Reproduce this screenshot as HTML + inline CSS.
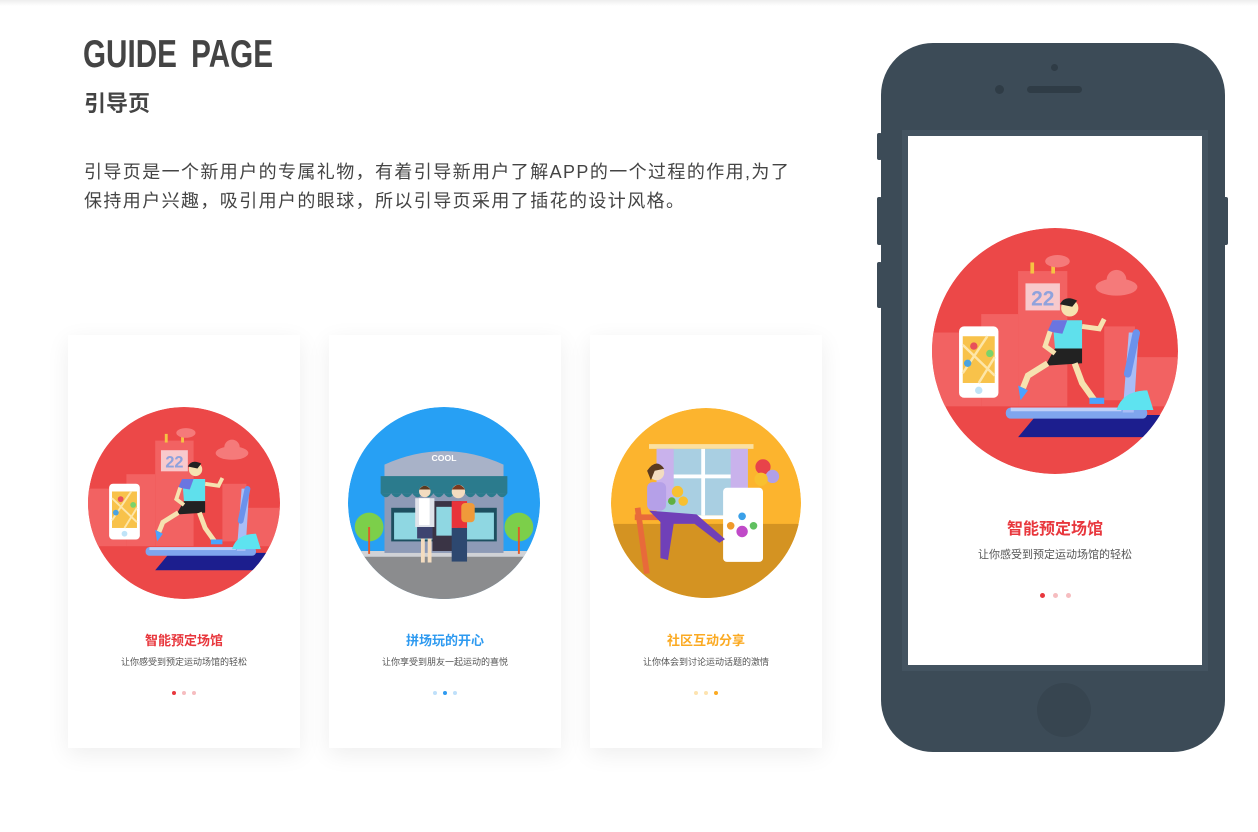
<!DOCTYPE html>
<html><head><meta charset="utf-8">
<style>
*{margin:0;padding:0;box-sizing:border-box}
body{width:1258px;height:832px;background:#fff;position:relative;overflow:hidden;font-family:"Liberation Sans","Noto Sans CJK SC",sans-serif}
.topline{position:absolute;left:0;top:0;width:1258px;height:6px;background:linear-gradient(#eee,#fff)}
h1{position:absolute;left:83px;top:33px;font-family:"Liberation Sans",sans-serif;font-weight:bold;font-size:39px;color:#444;transform:scaleX(0.76);transform-origin:left;word-spacing:8px;white-space:nowrap}
h2{position:absolute;left:84px;top:86px;font-size:22px;font-weight:bold;color:#444}
p.d{position:absolute;left:84px;top:158px;font-size:18px;line-height:29px;color:#444;width:760px;letter-spacing:1.4px;white-space:nowrap}
.card{position:absolute;top:335px;width:232px;height:413px;background:#fff;box-shadow:0 6px 22px rgba(0,0,0,0.07)}
.card svg{position:absolute;left:20px;top:72px}
.ct{position:absolute;left:0;width:100%;top:295px;text-align:center;font-size:13px;font-weight:bold}
.cs{position:absolute;left:0;width:100%;top:320px;text-align:center;font-size:9px;color:#555}
.dots{position:absolute;left:0;width:100%;top:356px;text-align:center;font-size:0}
.dots i{display:inline-block;width:4px;height:4px;border-radius:50%;margin:0 3px}
.phone{position:absolute;left:881px;top:43px;width:344px;height:709px;background:#3c4b57;border-radius:52px}
.btn{position:absolute;background:#3c4b57;width:5px;border-radius:2px}
.screen{position:absolute;left:27px;top:93px;width:294px;height:529px;background:#fff;outline:6px solid #435360}
</style></head><body>
<div class="topline"></div>
<h1>GUIDE PAGE</h1>
<h2>引导页</h2>
<p class="d">引导页是一个新用户的专属礼物，有着引导新用户了解APP的一个过程的作用,为了<br>保持用户兴趣，吸引用户的眼球，所以引导页采用了插花的设计风格。</p>

<!-- card 1 -->
<div class="card" style="left:68px">
<svg width="192" height="192" viewBox="-100 -100 200 200">
<defs><clipPath id="c1"><circle r="100"/></clipPath></defs>
<g clip-path="url(#c1)">
<circle r="100" fill="#ec4848"/>
<g fill="#f26262"><rect x="-100" y="-15" width="40" height="60"/><rect x="-60" y="-30" width="30" height="75"/><rect x="-30" y="-65" width="40" height="110"/><rect x="40" y="-20" width="25" height="60"/><rect x="65" y="5" width="40" height="40"/></g>
<rect x="-24" y="-55" width="28" height="22" fill="#f8c9cc"/>
<text x="-10" y="-37" font-size="17" font-weight="bold" fill="#8fa2dc" text-anchor="middle" font-family="Liberation Sans">22</text>
<rect x="-20" y="-72" width="3" height="9" fill="#f6c243"/><rect x="-3" y="-72" width="3" height="9" fill="#f6c243"/>
<g fill="#f57a7a"><ellipse cx="2" cy="-73" rx="10" ry="5"/><ellipse cx="50" cy="-52" rx="17" ry="7"/><circle cx="50" cy="-58" r="8"/></g>
<rect x="-78" y="-20" width="32" height="58" rx="4" fill="#fff"/>
<rect x="-75" y="-12" width="26" height="38" fill="#f8c24a"/>
<path d="M-75 -5 L-49 20 M-75 18 L-55 -12 M-62 26 L-49 5" stroke="#fde6a8" stroke-width="2"/>
<circle cx="-62" cy="32" r="3" fill="#bfe3f7"/>
<circle cx="-66" cy="-4" r="3" fill="#e8505a"/><circle cx="-71" cy="10" r="3" fill="#4aa3e0"/><circle cx="-53" cy="2" r="3" fill="#7bd36a"/>
<polygon points="-30,70 80,70 100,52 -15,52" fill="#1c1e8e"/>
<rect x="-40" y="46" width="115" height="9" rx="4" fill="#7fa5ee"/>
<rect x="-36" y="46" width="90" height="3" fill="#c0d0f8"/>
<polygon points="55,50 60,-15 68,-15 64,50" fill="#a9bdf6"/>
<rect x="60" y="-18" width="6" height="40" rx="3" fill="#6b92ec" transform="rotate(12 63 0)"/>
<path d="M50 48 Q55 32 75 32 L80 48 Z" fill="#5ee3f0"/>
<circle cx="12" cy="-35" r="7" fill="#f6e2b0"/><path d="M4 -38 Q8 -46 18 -41 L14 -36 Z" fill="#222"/>
<path d="M-2 -25 L22 -25 L22 -2 L0 -2 Z" fill="#5fe0ec"/>
<path d="M-2 -25 L10 -25 L6 -14 L-6 -16 Z" fill="#6b75e0"/>
<path d="M0 -2 L22 -2 L22 10 L-8 12 Z" fill="#222"/>
<path d="M22 -20 L36 -18 L40 -26" stroke="#f6e2b0" stroke-width="4" fill="none"/>
<path d="M-4 -16 L-8 -4 L0 2" stroke="#f6e2b0" stroke-width="4" fill="none"/>
<path d="M-6 10 L-22 20 L-26 30" stroke="#f6e2b0" stroke-width="5" fill="none"/>
<path d="M16 10 L22 26 L32 40" stroke="#f6e2b0" stroke-width="5" fill="none"/>
<path d="M-30 28 L-22 32 L-28 40 Z" fill="#4aa3ff"/><rect x="28" y="38" width="12" height="5" fill="#4aa3ff"/>
</g></svg>
<div class="ct" style="color:#e8373d">智能预定场馆</div>
<div class="cs">让你感受到预定运动场馆的轻松</div>
<div class="dots"><i style="background:#e8373d"></i><i style="background:#f6bdc0"></i><i style="background:#f6bdc0"></i></div>
</div>

<!-- card 2 -->
<div class="card" style="left:329px">
<svg width="192" height="192" viewBox="-100 -100 200 200" style="left:19px">
<defs><clipPath id="c2"><circle r="100"/></clipPath></defs>
<g clip-path="url(#c2)">
<circle r="100" fill="#27a0f4"/>
<rect x="-100" y="55" width="200" height="50" fill="#8b8c8e"/>
<rect x="-100" y="50" width="200" height="6" fill="#d0d2d6"/>
<rect x="-62" y="-40" width="124" height="92" fill="#8d9ab6"/>
<path d="M-62 -40 Q0 -68 62 -40 L62 -28 L-62 -28 Z" fill="#a8b2c8"/>
<text x="0" y="-44" font-size="9" font-weight="bold" fill="#fff" text-anchor="middle" font-family="Liberation Sans">COOL</text>
<rect x="-66" y="-28" width="132" height="18" fill="#2b7b8d"/>
<path d="M-66 -10 q5.5 8 11 0 q5.5 8 11 0 q5.5 8 11 0 q5.5 8 11 0 q5.5 8 11 0 q5.5 8 11 0 q5.5 8 11 0 q5.5 8 11 0 q5.5 8 11 0 q5.5 8 11 0 q5.5 8 11 0 q5.5 8 11 0 Z" fill="#2b7b8d"/>
<rect x="-55" y="5" width="110" height="35" fill="#1d4f60"/>
<rect x="-52" y="10" width="104" height="28" fill="#8fd7e2"/>
<rect x="-12" y="-2" width="30" height="52" fill="#3a3445"/><rect x="-8" y="4" width="22" height="30" fill="#8fd7e2"/>
<circle cx="-78" cy="25" r="15" fill="#7ccf4a"/><rect x="-79" y="25" width="2" height="28" fill="#e05a2a"/>
<circle cx="78" cy="25" r="15" fill="#7ccf4a"/><rect x="77" y="25" width="2" height="28" fill="#e05a2a"/>
<rect x="-30" y="-5" width="20" height="30" fill="#dfe3ea"/><rect x="-26" y="-5" width="11" height="28" fill="#fff"/>
<rect x="-28" y="25" width="16" height="12" fill="#3d4470"/>
<rect x="-24" y="37" width="4" height="25" fill="#f3dcc0"/><rect x="-17" y="37" width="4" height="25" fill="#f3dcc0"/>
<circle cx="-20" cy="-12" r="6" fill="#f3dcc0"/><path d="M-26 -14 Q-20 -22 -14 -14 Z" fill="#5a3a20"/>
<rect x="8" y="-2" width="16" height="28" fill="#e8333a"/>
<rect x="18" y="0" width="14" height="20" rx="4" fill="#f09a3a"/>
<rect x="8" y="26" width="16" height="35" fill="#2d4870"/>
<circle cx="15" cy="-12" r="7" fill="#f3dcc0"/><path d="M8 -14 Q15 -24 22 -14 Z" fill="#7a3a20"/>
</g></svg>
<div class="ct" style="color:#2e9af0">拼场玩的开心</div>
<div class="cs">让你享受到朋友一起运动的喜悦</div>
<div class="dots"><i style="background:#bfe0fa"></i><i style="background:#2e9af0"></i><i style="background:#bfe0fa"></i></div>
</div>

<!-- card 3 -->
<div class="card" style="left:590px">
<svg width="190" height="190" viewBox="-100 -100 200 200" style="left:21px;top:73px">
<defs><clipPath id="c3"><circle r="100"/></clipPath></defs>
<g clip-path="url(#c3)">
<circle r="100" fill="#fcb42e"/>
<rect x="-100" y="22" width="200" height="80" fill="#d49322"/>
<rect x="-60" y="-62" width="110" height="5" fill="#fbe0a0"/>
<rect x="-52" y="-57" width="96" height="70" fill="#a9cfe2"/>
<rect x="-52" y="-57" width="18" height="55" fill="#c9b2ec"/><rect x="26" y="-57" width="18" height="55" fill="#c9b2ec"/>
<rect x="-5" y="-57" width="4" height="70" fill="#fff"/><rect x="-34" y="-30" width="60" height="4" fill="#fff"/>
<rect x="-55" y="13" width="102" height="4" fill="#fff"/>
<circle cx="60" cy="-38" r="8" fill="#e8434a"/><circle cx="70" cy="-28" r="7" fill="#b0a0e8"/><circle cx="58" cy="-25" r="7" fill="#f8c030"/>
<rect x="18" y="-16" width="42" height="78" rx="4" fill="#fff"/>
<circle cx="38" cy="30" r="6" fill="#c04ac8"/><circle cx="26" cy="24" r="4" fill="#f09a2a"/><circle cx="50" cy="24" r="4" fill="#60c060"/><circle cx="38" cy="14" r="4" fill="#3aa0e8"/>
<rect x="-75" y="5" width="6" height="70" fill="#e86a3a" transform="rotate(-8 -72 5)"/>
<rect x="-75" y="12" width="35" height="6" fill="#e86a3a"/>
<rect x="-62" y="-22" width="20" height="30" rx="6" fill="#b5a0e8"/>
<path d="M-60 8 L-10 12 L20 38 L14 42 L-12 22 L-34 22 L-40 60 L-48 58 L-48 20 Z" fill="#7040b8"/>
<circle cx="-52" cy="-32" r="8" fill="#f3dcc0"/><path d="M-62 -34 Q-52 -48 -44 -36 L-54 -34 L-58 -24 Z" fill="#5a3a20"/>
<circle cx="-30" cy="-12" r="6" fill="#f8c030"/><circle cx="-24" cy="-2" r="5" fill="#f8c030"/><circle cx="-36" cy="-2" r="4" fill="#60b040"/>
</g></svg>
<div class="ct" style="color:#fbaa22">社区互动分享</div>
<div class="cs">让你体会到讨论运动话题的激情</div>
<div class="dots"><i style="background:#fde3b0"></i><i style="background:#fde3b0"></i><i style="background:#fbaa22"></i></div>
</div>

<!-- phone -->
<div class="btn" style="left:877px;top:133px;height:27px"></div>
<div class="btn" style="left:877px;top:197px;height:48px"></div>
<div class="btn" style="left:877px;top:262px;height:46px"></div>
<div class="btn" style="left:1223px;top:197px;height:48px"></div>
<div class="phone">
<div style="position:absolute;left:170px;top:21px;width:7px;height:7px;border-radius:50%;background:#2f3c46"></div>
<div style="position:absolute;left:114px;top:42px;width:9px;height:9px;border-radius:50%;background:#2f3c46"></div>
<div style="position:absolute;left:146px;top:43px;width:55px;height:7px;border-radius:4px;background:#2f3c46"></div>
<div class="screen">
<svg width="246" height="246" viewBox="-100 -100 200 200" style="position:absolute;left:24px;top:92px">
<defs><clipPath id="c4"><circle r="100"/></clipPath></defs>
<g clip-path="url(#c4)">
<circle r="100" fill="#ec4848"/>
<g fill="#f26262"><rect x="-100" y="-15" width="40" height="60"/><rect x="-60" y="-30" width="30" height="75"/><rect x="-30" y="-65" width="40" height="110"/><rect x="40" y="-20" width="25" height="60"/><rect x="65" y="5" width="40" height="40"/></g>
<rect x="-24" y="-55" width="28" height="22" fill="#f8c9cc"/>
<text x="-10" y="-37" font-size="17" font-weight="bold" fill="#8fa2dc" text-anchor="middle" font-family="Liberation Sans">22</text>
<rect x="-20" y="-72" width="3" height="9" fill="#f6c243"/><rect x="-3" y="-72" width="3" height="9" fill="#f6c243"/>
<g fill="#f57a7a"><ellipse cx="2" cy="-73" rx="10" ry="5"/><ellipse cx="50" cy="-52" rx="17" ry="7"/><circle cx="50" cy="-58" r="8"/></g>
<rect x="-78" y="-20" width="32" height="58" rx="4" fill="#fff"/>
<rect x="-75" y="-12" width="26" height="38" fill="#f8c24a"/>
<path d="M-75 -5 L-49 20 M-75 18 L-55 -12 M-62 26 L-49 5" stroke="#fde6a8" stroke-width="2"/>
<circle cx="-62" cy="32" r="3" fill="#bfe3f7"/>
<circle cx="-66" cy="-4" r="3" fill="#e8505a"/><circle cx="-71" cy="10" r="3" fill="#4aa3e0"/><circle cx="-53" cy="2" r="3" fill="#7bd36a"/>
<polygon points="-30,70 80,70 100,52 -15,52" fill="#1c1e8e"/>
<rect x="-40" y="46" width="115" height="9" rx="4" fill="#7fa5ee"/>
<rect x="-36" y="46" width="90" height="3" fill="#c0d0f8"/>
<polygon points="55,50 60,-15 68,-15 64,50" fill="#a9bdf6"/>
<rect x="60" y="-18" width="6" height="40" rx="3" fill="#6b92ec" transform="rotate(12 63 0)"/>
<path d="M50 48 Q55 32 75 32 L80 48 Z" fill="#5ee3f0"/>
<circle cx="12" cy="-35" r="7" fill="#f6e2b0"/><path d="M4 -38 Q8 -46 18 -41 L14 -36 Z" fill="#222"/>
<path d="M-2 -25 L22 -25 L22 -2 L0 -2 Z" fill="#5fe0ec"/>
<path d="M-2 -25 L10 -25 L6 -14 L-6 -16 Z" fill="#6b75e0"/>
<path d="M0 -2 L22 -2 L22 10 L-8 12 Z" fill="#222"/>
<path d="M22 -20 L36 -18 L40 -26" stroke="#f6e2b0" stroke-width="4" fill="none"/>
<path d="M-4 -16 L-8 -4 L0 2" stroke="#f6e2b0" stroke-width="4" fill="none"/>
<path d="M-6 10 L-22 20 L-26 30" stroke="#f6e2b0" stroke-width="5" fill="none"/>
<path d="M16 10 L22 26 L32 40" stroke="#f6e2b0" stroke-width="5" fill="none"/>
<path d="M-30 28 L-22 32 L-28 40 Z" fill="#4aa3ff"/><rect x="28" y="38" width="12" height="5" fill="#4aa3ff"/>
</g></svg>
<div style="position:absolute;left:0;width:100%;top:379px;text-align:center;font-size:16px;font-weight:bold;color:#e8373d">智能预定场馆</div>
<div style="position:absolute;left:0;width:100%;top:410px;text-align:center;font-size:11px;color:#555">让你感受到预定运动场馆的轻松</div>
<div style="position:absolute;left:0;width:100%;top:457px;text-align:center;font-size:0"><i style="display:inline-block;width:5px;height:5px;border-radius:50%;margin:0 4px;background:#e8373d"></i><i style="display:inline-block;width:5px;height:5px;border-radius:50%;margin:0 4px;background:#f6bdc0"></i><i style="display:inline-block;width:5px;height:5px;border-radius:50%;margin:0 4px;background:#f6bdc0"></i></div>
</div>
<div style="position:absolute;left:156px;top:640px;width:54px;height:54px;border-radius:50%;background:#374550"></div>
</div>
</body></html>
